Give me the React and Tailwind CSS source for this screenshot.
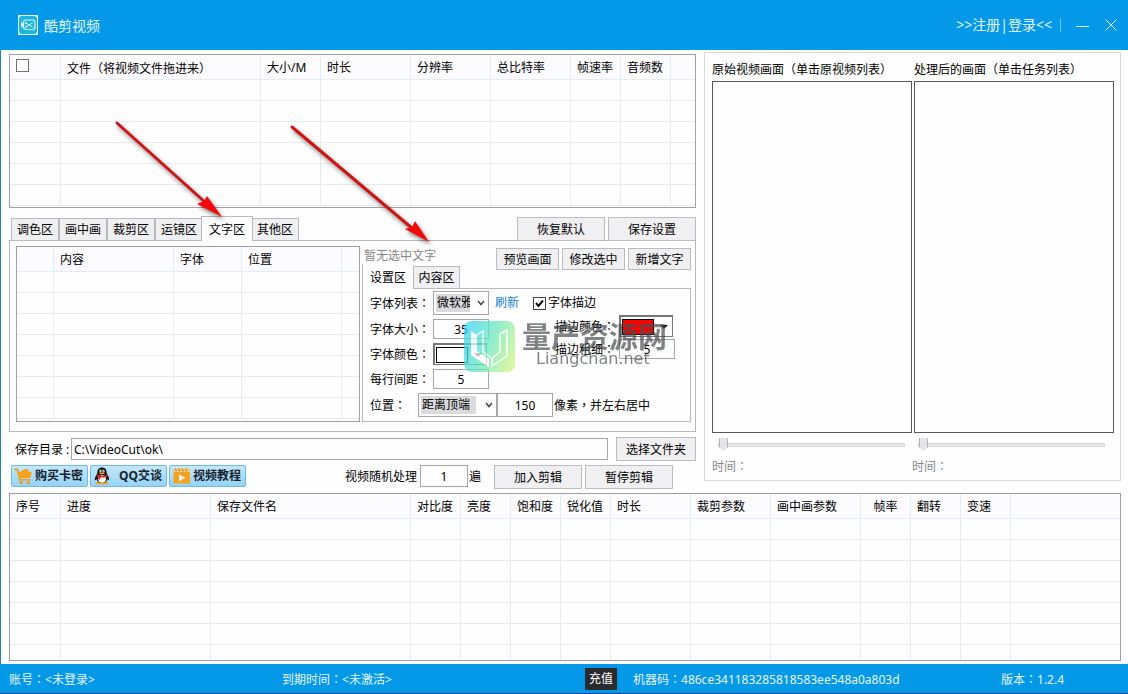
import React from "react";

const GRID = "border-[#e9eaec]";

// Full-width punctuation set in the middle of its cell.
function Mark({ children }) {
  return (
    <span lang="zh-TW" className="font-['Noto_Sans_CJK_TC','Noto_Sans_CJK_SC',sans-serif]">
      {children}
    </span>
  );
}

function Colon() {
  return <Mark>：</Mark>;
}

function DataTable({ label, columns, rows, last = "h-[21px]", className = "" }) {
  return (
    <div className={`border border-[#a0a0a4] bg-[#fefefe] ${className}`}>
      <table aria-label={label} className="w-full table-fixed border-separate border-spacing-0">
        <colgroup>
          {columns.map((c, i) => (
            <col key={i} className={c.w} />
          ))}
        </colgroup>
        <thead>
          <tr className="h-[25px] bg-[#fcfbfe]">
            {columns.map((c, i) => (
              <th
                key={i}
                scope="col"
                className={`overflow-hidden border-r border-b border-[#e2ecf4] p-0 pt-[2px] font-normal whitespace-nowrap last:border-r-0 ${c.center ? "text-center" : "pl-[6px] text-left"}`}
              >
                {c.text}
              </th>
            ))}
          </tr>
        </thead>
        <tbody>
          {Array.from({ length: rows }, (_, r) => (
            <tr key={r} className={r === rows - 1 ? last : "h-[21px]"}>
              {columns.map((_, i) => (
                <td
                  key={i}
                  className={`border-r p-0 last:border-r-0 ${GRID} ${r === rows - 1 && last !== "h-[21px]" ? "" : "border-b"}`}
                />
              ))}
            </tr>
          ))}
        </tbody>
      </table>
    </div>
  );
}

function Btn({ className = "", children }) {
  return (
    <button type="button" className={`border border-[#bcbcc0] bg-[#f0eff2] pt-[2px] whitespace-nowrap ${className}`}>
      {children}
    </button>
  );
}

function NumberBox({ id, value, label, className }) {
  return (
    <input
      id={id}
      aria-label={label}
      defaultValue={value}
      className={`min-w-0 border border-[#a6a6aa] bg-[#fefefe] text-center outline-none ${className}`}
    />
  );
}

function Select({ id, value, label, className, highlight }) {
  return (
    <span className={`relative inline-block h-6 ${className}`}>
      <select
        id={id}
        aria-label={label}
        className={`h-full w-full appearance-none border border-[#a6a6aa] bg-[linear-gradient(#dbdbde,#dbdbde)] bg-[position:2px_center] bg-no-repeat pr-[18px] pl-[3px] outline-none ${highlight}`}
      >
        <option>{value}</option>
      </select>
      <svg viewBox="0 0 8 6" className="pointer-events-none absolute top-[9px] right-1 h-[6px] w-2">
        <path d="M1 1 L4 4.5 L7 1" fill="none" stroke="#444" strokeWidth="1.5" />
      </svg>
    </span>
  );
}

function ColorPicker({ id, color }) {
  return (
    <button
      id={id}
      type="button"
      className="flex h-[22px] w-[54px] items-center border-2 border-r border-b border-[#77777a] bg-[#fefefe] pl-px"
    >
      <span className={`h-4 w-8 shrink-0 border border-black ${color}`} />
      <span className="flex h-full flex-1 items-center justify-center border-l border-[#e2e2e4]">
        <svg viewBox="0 0 8 4" className="h-1 w-2 shrink-0">
          <path d="M0 0 H8 L4 4 Z" fill="#111" />
        </svg>
      </span>
    </button>
  );
}

function Label({ htmlFor, children }) {
  return (
    <label htmlFor={htmlFor} className="w-[63px] shrink-0 whitespace-nowrap">
      {children}
      <Colon />
    </label>
  );
}

function LinkButton({ icon, children }) {
  return (
    <button
      type="button"
      className="flex h-[22px] w-[77px] items-center justify-between rounded-xs border border-[#6fb9e6] bg-linear-to-b from-[#c4e8fc] to-[#94d3f7] pr-1 pl-[2px] font-bold whitespace-nowrap text-[#16222c]"
    >
      {icon}
      {children}
    </button>
  );
}

const CartIcon = (
  <svg viewBox="0 0 20 18" className="h-[17px] w-[19px]">
    <path d="M0 1.5 H3.5 L6 12.5 H17" fill="none" stroke="#f59a14" strokeWidth="1.7" />
    <path d="M4 4 H8 V2 H11 V1 H15 V4 H19 L17 10.5 H5.5 Z" fill="#f7a21c" />
    <circle cx="7.5" cy="15.5" r="1.8" fill="#f59a14" />
    <circle cx="15" cy="15.5" r="1.8" fill="#f59a14" />
  </svg>
);

const PenguinIcon = (
  <svg viewBox="0 0 16 18" className="ml-px h-[18px] w-4">
    <ellipse cx="5" cy="16" rx="3.2" ry="1.5" fill="#f5a31a" />
    <ellipse cx="11" cy="16" rx="3.2" ry="1.5" fill="#f5a31a" />
    <path d="M8 0.5 C4.8 0.5 3.3 2.8 3.4 5.6 C3.4 7.4 0.8 9.6 0.8 12.2 C0.8 13.8 1.8 13.4 2.6 12 C3 14.6 5 16 8 16 C11 16 13 14.6 13.4 12 C14.2 13.4 15.2 13.8 15.2 12.2 C15.2 9.6 12.6 7.4 12.6 5.6 C12.7 2.8 11.2 0.5 8 0.5 Z" fill="#111" />
    <ellipse cx="8" cy="12" rx="4" ry="3.7" fill="#fff" />
    <ellipse cx="6.5" cy="3.9" rx="1.1" ry="1.5" fill="#fff" />
    <ellipse cx="9.5" cy="3.9" rx="1.1" ry="1.5" fill="#fff" />
    <circle cx="6.8" cy="4.1" r="0.5" fill="#111" />
    <circle cx="9.2" cy="4.1" r="0.5" fill="#111" />
    <ellipse cx="8" cy="6.3" rx="2.9" ry="0.9" fill="#f5a31a" />
    <path d="M3 7.6 Q8 10.4 13 7.6 L13.3 9.4 Q8 11.8 2.7 9.4 Z" fill="#e5211c" />
    <path d="M4 9.5 L6.3 10.3 L6 12.6 L4 12.2 Z" fill="#e5211c" />
  </svg>
);

const VideoIcon = (
  <svg viewBox="0 0 18 16" className="ml-px h-4 w-[18px]">
    <rect x="0.5" y="4" width="16.5" height="11.5" fill="#f7a21c" />
    <path d="M0.5 0.5 H17 V3.5 H0.5 Z" fill="#f7c56e" />
    <path d="M2 0.5 L3.5 3.5 M5.5 0.5 L7 3.5 M9 0.5 L10.5 3.5 M12.5 0.5 L14 3.5" stroke="#e08a10" strokeWidth="1.2" />
    <path d="M6 6.5 L12.5 9.8 L6 13.2 Z" fill="#e8f4fc" />
  </svg>
);

const fileColumns = [
  {
    w: "w-[51px]",
    text: (
      <input
        type="checkbox"
        aria-label="全选"
        className="mb-[6px] block size-[13px] appearance-none border border-[#707074] bg-white"
      />
    ),
  },
  {
    w: "w-[200px]",
    text: (
      <>
        文件<Mark>（</Mark>将视频文件拖进来<Mark>）</Mark>
      </>
    ),
  },
  { w: "w-[60px]", text: "大小/M" },
  { w: "w-[90px]", text: "时长" },
  { w: "w-[80px]", text: "分辨率" },
  { w: "w-[80px]", text: "总比特率" },
  { w: "w-[50px]", text: "帧速率" },
  { w: "w-[50px]", text: "音频数" },
  { w: "", text: "" },
];

const textColumns = [
  { w: "w-[37px]", text: "" },
  { w: "w-[120px]", text: "内容" },
  { w: "w-[68px]", text: "字体" },
  { w: "w-[100px]", text: "位置" },
  { w: "", text: "" },
];

const taskColumns = [
  { w: "w-[51px]", text: "序号" },
  { w: "w-[150px]", text: "进度" },
  { w: "w-[200px]", text: "保存文件名" },
  { w: "w-[50px]", text: "对比度" },
  { w: "w-[50px]", text: "亮度" },
  { w: "w-[50px]", text: "饱和度" },
  { w: "w-[50px]", text: "锐化值" },
  { w: "w-[80px]", text: "时长" },
  { w: "w-[80px]", text: "裁剪参数" },
  { w: "w-[90px]", text: "画中画参数" },
  { w: "w-[50px]", text: "帧率", center: true },
  { w: "w-[50px]", text: "翻转" },
  { w: "w-[50px]", text: "变速" },
  { w: "", text: "" },
];

const tabs = ["调色区", "画中画", "裁剪区", "运镜区", "文字区", "其他区"];

function Tabs() {
  return (
    <div className="mt-2 flex items-end pl-[2px]">
      <div role="tablist" className="flex items-end">
        {tabs.map((t) =>
          t === "文字区" ? (
            <button
              key={t}
              role="tab"
              aria-selected="true"
              className="relative -mb-px -ml-[2px] h-[25px] w-[52px] border border-b-0 border-[#b9b9bd] bg-[#fefefe] pt-px"
            >
              {t}
            </button>
          ) : (
            <button
              key={t}
              role="tab"
              aria-selected="false"
              className="h-[22px] w-12 border border-b-0 border-[#b9b9bd] bg-[#f0eff2] last:-ml-[2px]"
            >
              {t}
            </button>
          )
        )}
      </div>
      <div className="-mb-px ml-auto flex gap-[3px]">
        <Btn className="h-6 w-[88px]">恢复默认</Btn>
        <Btn className="h-6 w-[88px]">保存设置</Btn>
      </div>
    </div>
  );
}

function TextSettings() {
  return (
    <div className="flex min-w-0 flex-col">
      <div className="flex justify-between">
        <div>
          <p className="h-[18px] pl-[2px] leading-5 text-[#87878a]">暂无选中文字</p>
          <div role="tablist" className="flex items-end">
            <button
              role="tab"
              aria-selected="true"
              className="relative -mb-px h-[25px] w-[51px] border-l border-[#b9b9bd] bg-[#fefefe] pt-[2px]"
            >
              设置区
            </button>
            <button
              role="tab"
              aria-selected="false"
              className="h-[22px] w-[47px] border border-b-0 border-[#b9b9bd] bg-[#f0eff2]"
            >
              内容区
            </button>
          </div>
        </div>
        <div className="flex gap-[3px] pt-[2px]">
          <Btn className="h-[22px] w-[63px]">预览画面</Btn>
          <Btn className="h-[22px] w-[63px]">修改选中</Btn>
          <Btn className="h-[22px] w-[63px]">新增文字</Btn>
        </div>
      </div>

      <div className="flex flex-1 flex-col gap-1 border border-[#b9b9bd] pt-[2px] pl-[7px]">
        <div className="flex">
          <div className="flex shrink-0 flex-col gap-1">
            <div className="flex items-center">
              <Label htmlFor="font">字体列表</Label>
              <Select id="font" value="微软雅黑" className="w-14" highlight="bg-[length:34px_18px]" />
            </div>
            <div className="flex items-center">
              <Label htmlFor="size">字体大小</Label>
              <NumberBox id="size" value="35" className="h-5 w-14" />
            </div>
            <div className="flex items-center">
              <Label htmlFor="color">字体颜色</Label>
              <ColorPicker id="color" color="bg-white" />
            </div>
            <div className="flex items-center">
              <Label htmlFor="spacing">每行间距</Label>
              <NumberBox id="spacing" value="5" className="h-5 w-14" />
            </div>
          </div>
          <div className="flex flex-col">
            <div className="flex h-6 items-center pl-[6px]">
              <a href="#refresh" className="text-[#1683d8]">
                刷新
              </a>
              <label className="ml-[14px] flex items-center gap-[2px] whitespace-nowrap">
                <span className="relative size-[13px]">
                  <input
                    type="checkbox"
                    defaultChecked
                    className="peer block size-[13px] appearance-none border border-[#444] bg-white"
                  />
                  <svg
                    viewBox="0 0 13 13"
                    className="pointer-events-none absolute inset-0 hidden size-[13px] peer-checked:block"
                  >
                    <path d="M3 6 L5.5 9 L10 3.5" fill="none" stroke="#111" strokeWidth="2" />
                  </svg>
                </span>
                字体描边
              </label>
            </div>
            <div className="flex items-center pl-[66px]">
              <label htmlFor="outline-color" className="w-16 whitespace-nowrap">
                描边颜色
                <Colon />
              </label>
              <ColorPicker id="outline-color" color="bg-[#fb0000]" />
            </div>
            <div className="mt-[2px] flex items-center pl-[66px]">
              <label htmlFor="outline-width" className="w-16 whitespace-nowrap">
                描边粗细
                <Colon />
              </label>
              <NumberBox id="outline-width" value="5" className="h-5 w-14" />
            </div>
          </div>
        </div>
        <div className="flex items-center">
          <label htmlFor="position" className="w-12">
            位置
            <Colon />
          </label>
          <Select id="position" value="距离顶端" className="w-[79px]" highlight="bg-[length:55px_18px]" />
          <NumberBox label="像素" value="150" className="h-6 w-14" />
          <span className="pl-px whitespace-nowrap">
            像素<Mark>，</Mark>并左右居中
          </span>
        </div>
      </div>
    </div>
  );
}

function PreviewScreen({ name, hint }) {
  return (
    <section className="flex min-w-0 flex-col">
      <h2 className="h-7 overflow-hidden pt-[2px] leading-7 whitespace-nowrap">
        {name}
        <Mark>（</Mark>
        {hint}
        <Mark>）</Mark>
      </h2>
      <div className="h-[352px] border border-[#58585c]" />
    </section>
  );
}

function PreviewSeek({ label }) {
  return (
    <div className="flex min-w-0 flex-col">
      <input
        type="range"
        aria-label={label}
        defaultValue="0"
        className="mt-1 mr-[7px] ml-[6px] h-[15px] appearance-none bg-transparent [&::-webkit-slider-runnable-track]:h-[4px] [&::-webkit-slider-runnable-track]:border [&::-webkit-slider-runnable-track]:border-[#d8d8da] [&::-webkit-slider-runnable-track]:bg-[#e8e8ea] [&::-webkit-slider-thumb]:-mt-[6px] [&::-webkit-slider-thumb]:h-[14px] [&::-webkit-slider-thumb]:w-[9px] [&::-webkit-slider-thumb]:appearance-none [&::-webkit-slider-thumb]:bg-[linear-gradient(90deg,#b4b4b8_1px,#e6e6ea_1px,#e6e6ea_8px,#b4b4b8_8px)] [&::-webkit-slider-thumb]:[clip-path:polygon(0_0,100%_0,100%_68%,50%_100%,0_68%)]"
      />
      <p className="mt-[5px] h-[18px] leading-[18px] text-[#87878a]">
        时间
        <Colon />
      </p>
    </div>
  );
}

function Header() {
  return (
    <header className="flex h-[50px] items-center bg-[#0499e8] pr-[11px] pl-[18px] text-sm text-[#e4f5ff]">
      <svg viewBox="0 0 20 20" className="size-5">
        <rect width="20" height="20" fill="#eafaff" />
        <rect x="1" y="1" width="18" height="18" rx="3" fill="#1fb6dc" />
        <rect x="5.5" y="5" width="11.5" height="9.5" rx="2.5" fill="none" stroke="#d6f6ff" strokeWidth="1.1" />
        <path d="M3 7 L5.5 8.5 V11 L3 12.5 Z" fill="#d6f6ff" />
        <path d="M7.5 8 L14.5 12 M7.5 12 L14.5 8" stroke="#d6f6ff" strokeWidth="0.9" />
        <circle cx="7.8" cy="8" r="0.9" fill="#d6f6ff" />
        <circle cx="7.8" cy="12" r="0.9" fill="#d6f6ff" />
      </svg>
      <h1 className="ml-[6px] pt-[2px]">酷剪视频</h1>
      <a href="#login" className="ml-auto">
        &gt;&gt;注册|登录&lt;&lt;
      </a>
      <span className="ml-2 h-[14px] w-px bg-[#6cc4f2]" />
      <button type="button" aria-label="最小化" className="ml-[15px]">
        <svg viewBox="0 0 13 13" className="size-[13px]">
          <path d="M0 7.5 H13" stroke="#e4f5ff" />
        </svg>
      </button>
      <button type="button" aria-label="关闭" className="ml-4">
        <svg viewBox="0 0 12 12" className="size-3">
          <path d="M0.5 0.5 L11.5 11.5 M11.5 0.5 L0.5 11.5" stroke="#e4f5ff" />
        </svg>
      </button>
    </header>
  );
}

function Footer() {
  return (
    <footer className="grid h-[30px] grid-cols-[273fr_303fr_48fr_368fr_127fr] items-center border-b border-[#0a4a8c] bg-[#0499e8] pt-px pl-[9px] whitespace-nowrap text-[#e4f5ff]">
      <span>
        账号
        <Colon />
        &lt;未登录&gt;
      </span>
      <span>
        到期时间
        <Colon />
        &lt;未激活&gt;
      </span>
      <button type="button" className="h-[22px] w-8 bg-[#2a2b2e] text-white">
        充值
      </button>
      <span>
        机器码
        <Colon />
        486ce341183285818583ee548a0a803d
      </span>
      <span>
        版本
        <Colon />
        1.2.4
      </span>
    </footer>
  );
}

function Annotations() {
  return (
    <svg
      viewBox="0 0 440 260"
      className="pointer-events-none absolute top-0 left-0 h-[260px] w-[440px] drop-shadow-[2px_3px_2px_rgba(0,0,0,0.5)]"
    >
      <g stroke="#cf1414" strokeWidth="3" strokeLinecap="round">
        <path d="M117 123 L206 203" />
        <path d="M292 127 L413 229" />
      </g>
      <path d="M222 217 L207 196 L204 201 L197 204 Z" fill="#f50808" />
      <path d="M429 242 L415 221 L412 227 L405 229 Z" fill="#f50808" />
    </svg>
  );
}

function Watermark() {
  return (
    <div className="pointer-events-none absolute top-[321px] left-[464px] flex">
      <svg viewBox="0 0 51 51" className="size-[51px] opacity-75">
        <defs>
          <linearGradient id="wm" x1="0" y1="0.2" x2="1" y2="0.6">
            <stop offset="0" stopColor="#38d3f5" />
            <stop offset="0.55" stopColor="#6feaba" />
            <stop offset="1" stopColor="#c9f58a" />
          </linearGradient>
        </defs>
        <rect width="51" height="51" rx="8" fill="url(#wm)" />
        <path d="M7 10 L13 14 V30 L25 38 V45 L7 33 Z" fill="#fff" fillOpacity="0.9" />
        <path d="M7 34 L25 46 V39 L7 29 Z" fill="#fff" />
        <path d="M13 14 L19 10 V31 L27 37" fill="none" stroke="#fff" strokeWidth="1.2" />
        <path d="M28 45 V37 L36 31 V13 L43 9 V35 Z" fill="none" stroke="#fff" strokeWidth="1.4" />
      </svg>
      <div className="pl-[7px] text-[#4c4f52] opacity-70">
        <p className="text-[29px] leading-8 font-bold">量产资源网</p>
        <p className="pl-[14px] font-['DejaVu_Sans',sans-serif] text-base leading-3">Liangchan.net</p>
      </div>
    </div>
  );
}

export default function App() {
  return (
    <div
      lang="zh-CN"
      className="relative flex min-h-screen flex-col bg-[#fefefe] font-['Noto_Sans','Noto_Sans_CJK_SC',sans-serif] text-xs text-black"
    >
      <Header />
      <main className="flex-1 border-l border-[#2a86a8] pt-[2px] pr-[7px] pb-[3px] pl-2">
        <div className="grid grid-cols-[687fr_417fr] gap-2">
          <div className="min-w-0 pt-[2px]">
            <DataTable label="文件" columns={fileColumns} rows={6} className="pb-px" />
            <Tabs />
            <div className="grid grid-cols-[344fr_329fr] gap-[2px] border border-[#b9b9bd] pt-[5px] pr-1 pb-[9px] pl-[6px]">
              <DataTable label="文字" columns={textColumns} rows={7} className="pb-[2px]" />
              <TextSettings />
            </div>
            <div className="mt-[5px] flex h-6 items-center pl-[6px]">
              <label htmlFor="dir" className="w-14 overflow-hidden pt-[2px] whitespace-nowrap">
                保存目录 :
              </label>
              <input
                id="dir"
                defaultValue={"C:\\VideoCut\\ok\\"}
                className="h-[22px] min-w-0 flex-1 border border-[#a6a6aa] pl-[2px] text-xs outline-none"
              />
              <Btn className="ml-2 h-6 w-20">选择文件夹</Btn>
            </div>
            <div className="mt-1 flex h-6 items-start pr-[23px] pl-[2px]">
              <div className="flex gap-[2px]">
                <LinkButton icon={CartIcon}>购买卡密</LinkButton>
                <LinkButton icon={PenguinIcon}>QQ交谈</LinkButton>
                <LinkButton icon={VideoIcon}>视频教程</LinkButton>
              </div>
              <div className="ml-auto flex items-start">
                <label htmlFor="times" className="leading-6 whitespace-nowrap">
                  视频随机处理
                </label>
                <NumberBox id="times" value="1" className="ml-[3px] h-[22px] w-12" />
                <span className="ml-px leading-6">遍</span>
                <Btn className="ml-[13px] h-6 w-[88px]">加入剪辑</Btn>
                <Btn className="ml-[3px] h-6 w-[88px]">暂停剪辑</Btn>
              </div>
            </div>
          </div>
          <aside className="self-start border border-[#d9d9db] pr-[6px] pb-[5px] pl-[7px]">
            <div className="grid grid-cols-2 gap-[2px]">
              <PreviewScreen name="原始视频画面" hint="单击原视频列表" />
              <PreviewScreen name="处理后的画面" hint="单击任务列表" />
            </div>
            <div className="grid grid-cols-2 pr-[2px]">
              <PreviewSeek label="原始视频进度" />
              <PreviewSeek label="处理后视频进度" />
            </div>
          </aside>
        </div>
        <DataTable label="任务" columns={taskColumns} rows={7} last="h-[15px]" className="mt-1" />
      </main>
      <Footer />
      <Annotations />
      <Watermark />
    </div>
  );
}
